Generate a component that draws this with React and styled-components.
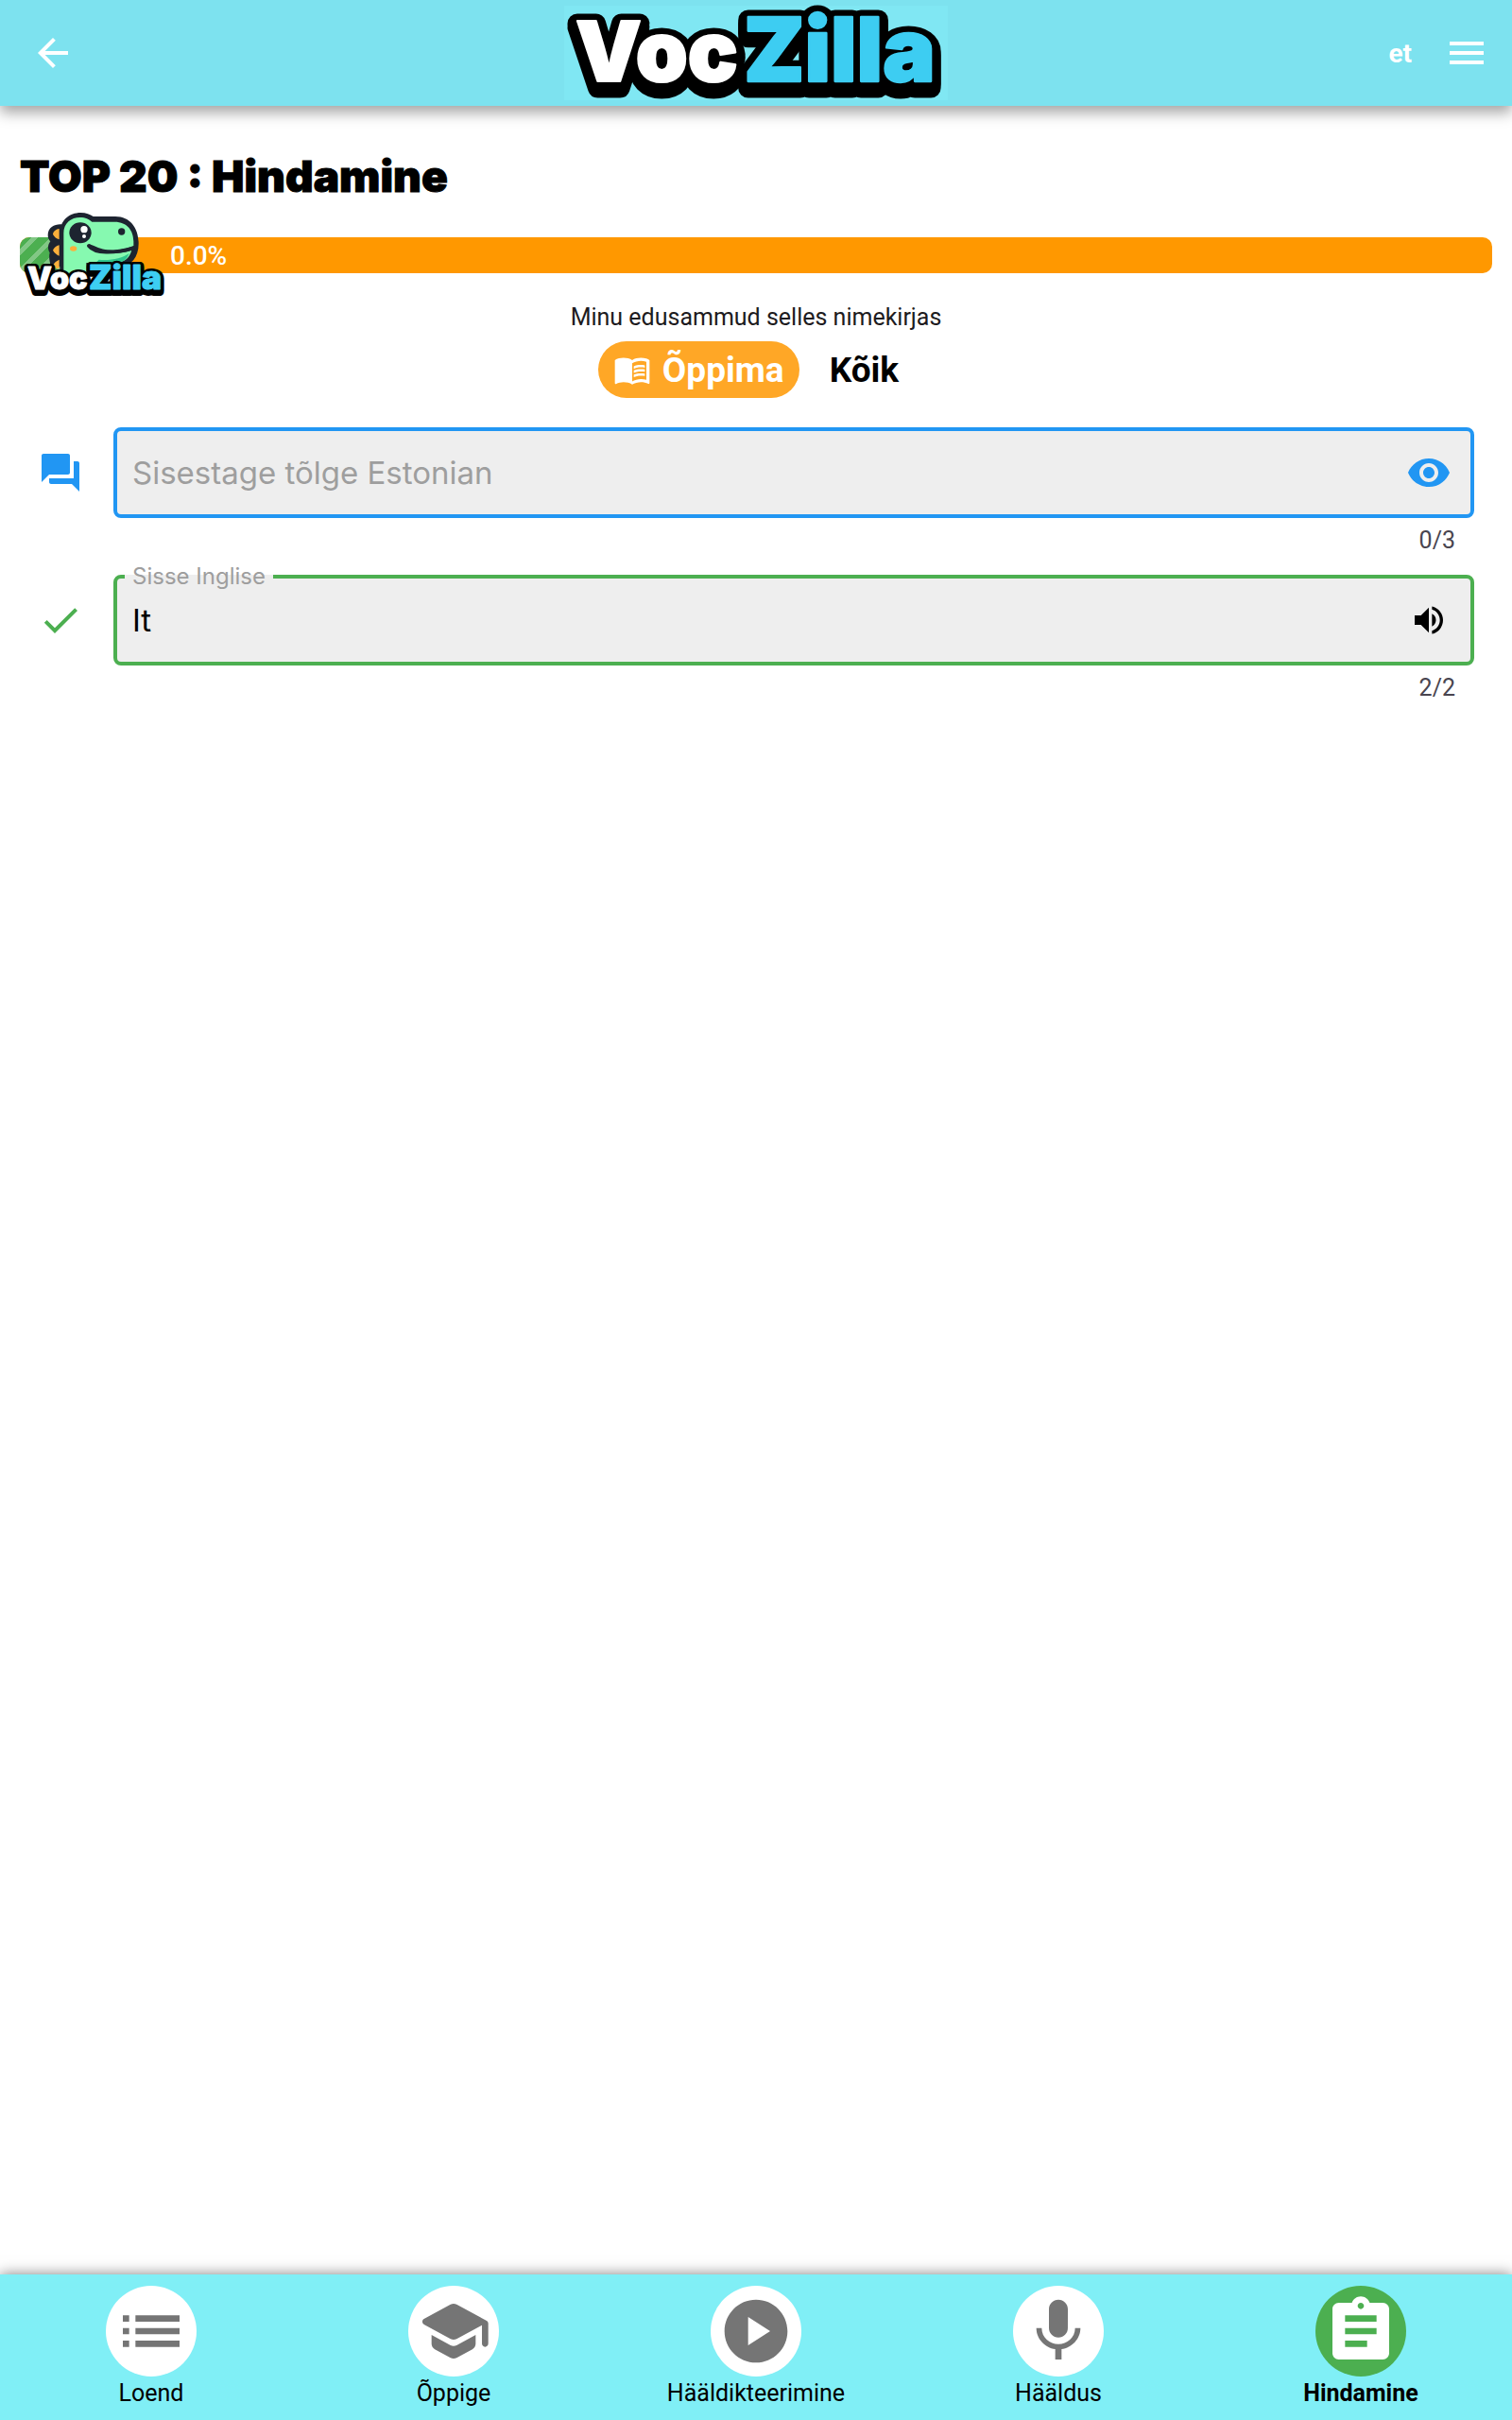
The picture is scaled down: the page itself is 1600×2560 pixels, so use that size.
import React from "react";
import styled, { createGlobalStyle } from "styled-components";
import {
  MdArrowBack, MdMenu, MdMenuBook, MdForum, MdCheck, MdVisibility,
  MdVolumeUp, MdList, MdPlayCircle, MdAssignment,
} from "react-icons/md";

const GlobalStyle = createGlobalStyle`
  *, *::before, *::after { box-sizing: border-box; }
  body { margin: 0; background: #fff; color: #1d1b20; font-family: Roboto, sans-serif; }
  button { font: inherit; color: inherit; border: 0; background: none; padding: 0; cursor: pointer; }
`;

const Page = styled.div`
  min-height: 100vh;
  display: flex;
  flex-direction: column;
`;

const Header = styled.header`
  display: grid;
  grid-template-columns: 1fr auto 1fr;
  align-items: center;
  height: 112px;
  padding: 0 24px 0 32px;
  background: #7de2ef;
  color: #fff;
  box-shadow: 0 7px 14px rgba(0, 0, 0, 0.36);
`;

const IconButton = styled.button`
  display: flex;
  font-size: ${(p) => p.$size || 48}px;
  color: ${(p) => p.$color || "#fff"};
`;

const HeaderActions = styled.div`
  display: flex;
  justify-content: flex-end;
  align-items: center;
  gap: 34px;
`;

const Language = styled.button`
  padding-top: 2px;
  font-size: 28px;
  font-weight: 700;
  line-height: 32px;
`;

const Brand = styled.a`
  display: flex;
  margin-right: 8px;
  background: #80e7f3;
`;

const BrandLogo = styled.svg`
  width: 406px;
  height: 100px;
  overflow: visible;
`;

const Main = styled.main`
  flex: 1;
  display: flex;
  flex-direction: column;
  padding: 50px 21px;
`;

const Title = styled.h1`
  margin: 0;
  font-family: Inter, sans-serif;
  font-size: 46px;
  font-weight: 900;
  line-height: 48px;
  color: #000;
  -webkit-text-stroke: 1px #000;
`;

const Progress = styled.div`
  position: relative;
  display: flex;
  align-items: center;
  height: 38px;
  margin-top: 41px;
  border-radius: 10px;
  background: #ff9800;
`;

const ProgressFill = styled.div`
  align-self: stretch;
  width: 80px;
  border-radius: 10px 0 0 10px;
  background: repeating-linear-gradient(135deg, #4caf50 0 9px, #82c785 9px 14px);
`;

const ProgressValue = styled.span`
  margin-left: 79px;
  padding-top: 2px;
  font-size: 28px;
  font-weight: 500;
  line-height: 32px;
  color: #fff;
`;

const Mascot = styled.svg`
  position: absolute;
  left: -21px;
  top: -31px;
  width: 176px;
  height: 96px;
  overflow: visible;
`;

const Caption = styled.p`
  margin: 31px 0 9px;
  font-size: 25px;
  line-height: 32px;
  text-align: center;
`;

const Filters = styled.div`
  display: flex;
  justify-content: center;
  gap: 16px;
`;

const Filter = styled.button`
  display: flex;
  align-items: center;
  gap: 12px;
  height: 60px;
  padding: 0 16px;
  border-radius: 30px;
  font-size: 37px;
  font-weight: 700;
  && {
    color: ${(p) => (p.$active ? "#fff" : "#000")};
    background: ${(p) => (p.$active ? "#ffa726" : "transparent")};
  }
  svg { font-size: 40px; }
`;

const Form = styled.form`
  display: flex;
  flex-direction: column;
  gap: 20px;
  padding: 0 19px;
  margin-top: 31px;
`;

const Row = styled.div`
  display: flex;
  gap: 32px;
`;

const RowIcon = styled.span`
  display: flex;
  align-items: center;
  height: 96px;
  font-size: 48px;
  color: ${(p) => p.$color};
`;

const Field = styled.div`
  flex: 1;
  min-width: 0;
`;

const Box = styled.div`
  position: relative;
  display: flex;
  align-items: center;
  height: 96px;
  padding: 0 20px 0 16px;
  border: 4px solid ${(p) => p.$color};
  border-radius: 8px;
  background: #eee;
`;

const IconSlot = styled.div`
  display: flex;
  justify-content: center;
  width: 48px;
`;

const Input = styled.input`
  flex: 1;
  min-width: 0;
  padding: 0;
  border: 0;
  outline: 0;
  background: transparent;
  font-family: Inter, sans-serif;
  font-size: 33px;
  font-weight: 400;
  line-height: 40px;
  color: #000;
  &::placeholder { color: #9e9e9e; opacity: 1; }
`;

const FloatingLabel = styled.label`
  position: absolute;
  left: 8px;
  top: -18px;
  padding: 0 8px;
  font-family: Inter, sans-serif;
  font-size: 24px;
  font-weight: 400;
  line-height: 32px;
  color: #9e9e9e;
  background: linear-gradient(transparent 14px, #eee 14px);
`;

const HiddenLabel = styled.label`
  position: absolute;
  width: 1px;
  height: 1px;
  overflow: hidden;
  clip-path: inset(50%);
`;

const Counter = styled.div`
  margin-top: 8px;
  padding-right: 20px;
  font-size: 25px;
  line-height: 32px;
  text-align: right;
  color: #49454f;
`;

const Nav = styled.nav`
  position: sticky;
  bottom: 0;
  display: grid;
  grid-template-columns: repeat(5, 1fr);
  padding: 12px 0 10px;
  background: #80eff6;
  box-shadow: 0 0 14px rgba(0, 0, 0, 0.5);
`;

const NavItem = styled.a`
  display: flex;
  flex-direction: column;
  align-items: center;
  font-size: 25px;
  line-height: 36px;
  font-weight: ${(p) => (p.$active ? 700 : 400)};
  color: #000;
  text-decoration: none;
`;

const Disc = styled.span`
  display: flex;
  align-items: center;
  justify-content: center;
  width: 96px;
  height: 96px;
  border-radius: 50%;
  font-size: 80px;
  color: ${(p) => (p.$active ? "#fff" : "#757575")};
  background: ${(p) => (p.$active ? "#4caf50" : "#fff")};
`;

const LogoText = styled.text`
  font-family: Inter, sans-serif;
  font-weight: 900;
  font-size: ${(p) => p.$size}px;
  stroke-linejoin: round;
`;

const SchoolIcon = () => (
  <svg width="1em" height="1em" viewBox="0 0 24 24" fill="currentColor" aria-hidden="true">
    <path d="M5 13.18v2.81c0 .73.4 1.41 1.04 1.76l5 2.73c.6.33 1.32.33 1.92 0l5-2.73c.64-.35 1.04-1.03 1.04-1.76v-2.81l-6.04 3.3c-.6.33-1.32.33-1.92 0L5 13.18zm6.04-9.66l-8.43 4.6c-.69.38-.69 1.38 0 1.76l8.43 4.6c.6.33 1.32.33 1.92 0L21 10.09V16c0 .55.45 1 1 1s1-.45 1-1V9.59c0-.37-.2-.7-.52-.88l-9.52-5.19a2.04 2.04 0 0 0-1.92 0z" />
  </svg>
);

const MicIcon = () => (
  <svg width="1em" height="1em" viewBox="0 0 24 24" fill="currentColor" aria-hidden="true">
    <path d="M12 14c1.66 0 2.99-1.34 2.99-3L15 5c0-1.66-1.34-3-3-3S9 3.34 9 5v6c0 1.66 1.34 3 3 3zm5.3-3c0 3-2.54 5.1-5.3 5.1S6.7 14 6.7 11H5c0 3.41 2.72 6.23 6 6.72V21h2v-3.28c3.28-.48 6-3.3 6-6.72h-1.7z" />
  </svg>
);

function Wordmark({ y, voc, zilla, outline, shadows }) {
  const parts = [
    { text: "Voc", fill: "#fff", ...voc },
    { text: "Zilla", fill: "#3dcdf2", ...zilla },
  ];
  return (
    <g>
      {shadows.map((dy) => parts.map((p) => (
        <LogoText key={p.text + dy} $size={p.size} x={p.x} y={y + dy} fill="#000" stroke="#000" strokeWidth={outline} aria-hidden="true">{p.text}</LogoText>
      )))}
      {parts.map((p) => (
        <LogoText key={p.text} $size={p.size} x={p.x} y={y} fill={p.fill} stroke={p.fill} strokeWidth={p.size / 40}>{p.text}</LogoText>
      ))}
    </g>
  );
}

function Dino() {
  return (
    <Mascot viewBox="0 240 528 288" role="img" aria-label="VocZilla">
      <path d="M196 292C176 290 152 300 152 326c0 10 4 16 8 20-8 10-10 24-2 36-4 12 0 30 4 44h36z" fill="#1d2430" />
      <path d="M188 306c-12 2-20 10-20 18 4 8 12 14 20 16zM188 358c-10 2-16 8-20 16 4 8 12 14 20 18zM188 404c-10 4-16 10-20 18l4 10h16z" fill="#fbb03b" />
      <path d="M190 440V320c0-40 30-65 66-65 18 0 30 6 40 12h70c50 0 74 40 74 86 0 44-24 70-60 76l-80 14z" fill="#1d2430" />
      <path d="M202 446V320c0-32 24-50 52-50 18 0 28 6 38 14h72c40 0 60 28 60 62v14c-40 18-90 20-126 0l-16-6c14 22 34 30 60 30 30 0 54-2 76-10-8 28-26 38-50 40h-94v32z" fill="#86f9b0" />
      <path d="M314 404c34 4 74-4 96-20-8 22-22 30-46 30h-60z" fill="#2fc58d" />
      <path d="M282 360c20 26 80 24 140 8" fill="none" stroke="#1d2430" strokeWidth="12" strokeLinecap="round" />
      <ellipse cx="255" cy="319" rx="35" ry="33" fill="#1d2430" />
      <circle cx="267" cy="308" r="11" fill="#fff" />
      <circle cx="267" cy="330" r="6" fill="#fff" />
      <circle cx="386" cy="315" r="11" fill="#1d2430" />
      <ellipse cx="233" cy="369" rx="11" ry="8" fill="#fbb03b" />
      <Wordmark y={499} voc={{ x: 87, size: 98 }} zilla={{ x: 282, size: 106 }} outline={24} shadows={[2, 8]} />
    </Mascot>
  );
}

const NAV = [
  { label: "Loend", icon: MdList },
  { label: "Õppige", icon: SchoolIcon },
  { label: "Hääldikteerimine", icon: MdPlayCircle },
  { label: "Hääldus", icon: MicIcon },
  { label: "Hindamine", icon: MdAssignment, active: true },
];

export default function App() {
  return (
    <>
      <GlobalStyle />
      <Page>
        <Header>
          <IconButton aria-label="Tagasi"><MdArrowBack /></IconButton>
          <Brand href="#" aria-label="VocZilla">
            <BrandLogo viewBox="0 0 406 100">
              <Wordmark y={80} voc={{ x: 12, size: 88 }} zilla={{ x: 190, size: 93 }} outline={21} shadows={[3, 7]} />
            </BrandLogo>
          </Brand>
          <HeaderActions>
            <Language>et</Language>
            <IconButton aria-label="Menüü"><MdMenu /></IconButton>
          </HeaderActions>
        </Header>

        <Main>
          <Title>TOP 20 : Hindamine</Title>
          <Progress>
            <ProgressFill />
            <ProgressValue>0.0%</ProgressValue>
            <Dino />
          </Progress>
          <Caption>Minu edusammud selles nimekirjas</Caption>
          <Filters>
            <Filter $active><MdMenuBook />Õppima</Filter>
            <Filter>Kõik</Filter>
          </Filters>

          <Form onSubmit={(e) => e.preventDefault()}>
            <Row>
              <RowIcon $color="#2196f3"><MdForum /></RowIcon>
              <Field>
                <Box $color="#2196f3">
                  <HiddenLabel htmlFor="translation">Sisestage tõlge Estonian</HiddenLabel>
                  <Input id="translation" placeholder="Sisestage tõlge Estonian" />
                  <IconSlot>
                    <IconButton type="button" $color="#2196f3" aria-label="Näita"><MdVisibility /></IconButton>
                  </IconSlot>
                </Box>
                <Counter>0/3</Counter>
              </Field>
            </Row>
            <Row>
              <RowIcon $color="#4caf50"><MdCheck /></RowIcon>
              <Field>
                <Box $color="#4caf50">
                  <FloatingLabel htmlFor="word">Sisse Inglise</FloatingLabel>
                  <Input id="word" defaultValue="It" />
                  <IconSlot>
                    <IconButton type="button" $size={40} $color="#000" aria-label="Kuula"><MdVolumeUp /></IconButton>
                  </IconSlot>
                </Box>
                <Counter>2/2</Counter>
              </Field>
            </Row>
          </Form>
        </Main>

        <Nav>
          {NAV.map(({ label, icon: Icon, active }) => (
            <NavItem key={label} href="#" $active={active} aria-current={active ? "page" : undefined}>
              <Disc $active={active}><Icon /></Disc>
              {label}
            </NavItem>
          ))}
        </Nav>
      </Page>
    </>
  );
}
